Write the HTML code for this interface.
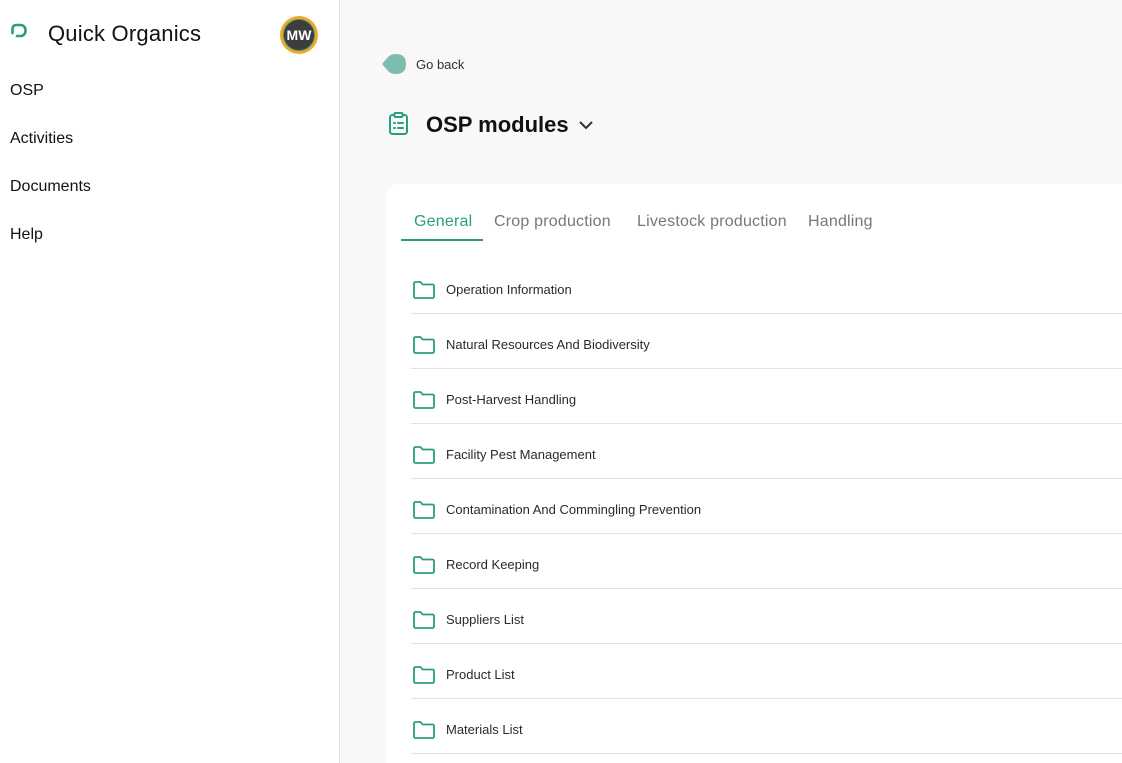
<!DOCTYPE html>
<html><head><style>
*{margin:0;padding:0;box-sizing:border-box}
html,body{width:1122px;height:763px;overflow:hidden}
body{font-family:"Liberation Sans",sans-serif;background:#f8f8f8;position:relative;color:#1a1a1a}
.side{position:absolute;left:0;top:0;width:340px;height:763px;background:#fff;border-right:1px solid #e4e4e4}
.logo{position:absolute;left:48px;top:21px;font-size:22px;color:#111;letter-spacing:0.2px}
.nav{position:absolute;left:10px;font-size:16px;color:#111}
.av{position:absolute;left:280px;top:16px;width:38px;height:38px;border-radius:50%;background:#f5a623;}
.av div{position:absolute;left:3px;top:3px;width:32px;height:32px;border-radius:50%;background:#3d3d3d;border:1px solid #2a9d7f;color:#fff;font-size:14px;font-weight:bold;text-align:center;line-height:30px}
.card{position:absolute;left:386px;top:184px;width:760px;height:600px;background:#fff;border-radius:12px}
.tab{position:absolute;top:213px;font-size:16px;color:#777;letter-spacing:0.2px}
.row{position:absolute;left:411px;width:711px;border-bottom:1px solid #e2e2e2}
.row svg{position:absolute;left:1px;top:-11px}
.row span{position:absolute;left:35px;top:-9px;font-size:13px;color:#2a2a2a}
</style></head><body>
<div class="side">
<svg style="position:absolute;left:10px;top:23px" width="19" height="18" viewBox="0 0 19 18"><path d="M2.5 10V5.5A3.5 3.5 0 0 1 6 2h4.5a5 5 0 0 1 5 5v1a5 5 0 0 1-5 5H7" fill="none" stroke="#2a9d7f" stroke-width="2.6" stroke-linecap="round"/></svg>
<div class="logo">Quick Organics</div>
<div class="av"><div>MW</div></div>
<div class="nav" style="top:82px">OSP</div>
<div class="nav" style="top:130px">Activities</div>
<div class="nav" style="top:178px">Documents</div>
<div class="nav" style="top:226px">Help</div>
</div>
<svg style="position:absolute;left:382px;top:54px" width="26" height="20" viewBox="0 0 26 20"><path d="M0 10L6 3Q9 0 14 0Q24 0 24 10Q24 20 14 20Q9 20 6 17Z" fill="#7dbdad"/></svg>
<div style="position:absolute;left:416px;top:57px;font-size:13px;color:#333">Go back</div>
<svg style="position:absolute;left:388px;top:112px" width="22" height="24" viewBox="0 0 22 24"><rect x="2" y="3" width="17" height="19" rx="2.5" fill="none" stroke="#2a9d7f" stroke-width="2"/><rect x="6.5" y="1" width="8" height="4" rx="1" fill="#fff" stroke="#2a9d7f" stroke-width="2"/><path d="M6 11h1M6 16h1M10 11h5M10 16h5" stroke="#2a9d7f" stroke-width="2" stroke-linecap="round"/></svg>
<div style="position:absolute;left:426px;top:112px;font-size:22px;font-weight:bold;color:#111">OSP modules</div>
<svg style="position:absolute;left:578px;top:119px" width="16" height="12" viewBox="0 0 16 12"><path d="M2 3l6 6 6-6" fill="none" stroke="#333" stroke-width="2"/></svg>
<div class="card"></div>
<div class="tab" style="left:414px;color:#2a9d7f">General</div>
<div style="position:absolute;left:401px;top:239px;width:82px;height:2px;background:#2a9d7f"></div>
<div class="tab" style="left:494px">Crop production</div>
<div class="tab" style="left:637px">Livestock production</div>
<div class="tab" style="left:808px">Handling</div>
<div id="rows"></div>
<script>
var n=["Operation Information","Natural Resources And Biodiversity","Post-Harvest Handling","Facility Pest Management","Contamination And Commingling Prevention","Record Keeping","Suppliers List","Product List","Materials List"];
var h="";n.forEach(function(t,i){var y=291+55*i;h+='<div class="row" style="top:'+(y)+'px;height:23px"><svg width="24" height="20" viewBox="0 0 24 20"><path d="M2 3.5a1.5 1.5 0 0 1 1.5-1.5h5l2 2.5h10a1.5 1.5 0 0 1 1.5 1.5v10.5a1.5 1.5 0 0 1-1.5 1.5h-17a1.5 1.5 0 0 1-1.5-1.5z" fill="none" stroke="#2a9d7f" stroke-width="1.8" stroke-linejoin="round"/></svg><span>'+t+'</span></div>';});
document.getElementById("rows").innerHTML=h;
</script>
</body></html>
